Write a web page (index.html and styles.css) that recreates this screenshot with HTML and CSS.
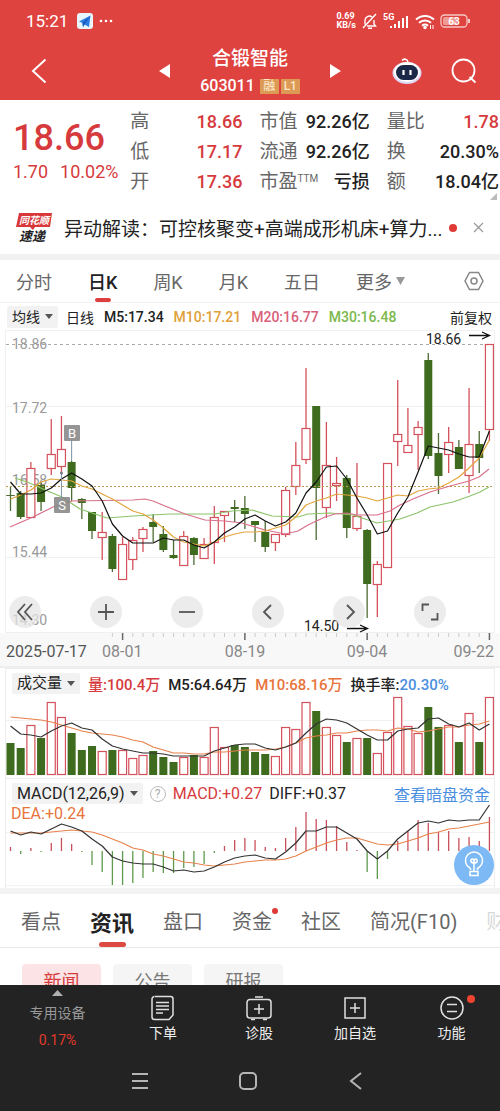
FILE: index.html
```html
<!DOCTYPE html>
<html lang="zh-CN">
<head>
<meta charset="utf-8">
<meta name="viewport" content="width=device-width, initial-scale=1">
<title>合锻智能 603011</title>
<link rel="stylesheet" href="styles.css">
</head>
<body>
<div class="app">
  <header class="header">
    <div class="status">
      <span class="clock">15:21</span>
      <svg class="tg" viewBox="0 0 16 16" width="16" height="16"><rect width="16" height="16" rx="3" fill="#e8f6fb"/><path d="M2 8.500 13.500 2.500 12 14 7.500 11.500 6 14 5.500 10Z" fill="#2b7de0"/><path d="M5.500 10 13.500 2.500 7.500 11.500 6 14Z" fill="#1a56c0"/></svg>
      <svg viewBox="0 0 16 4" width="16" height="4" fill="#fff"><circle cx="3" cy="2" r="1.300"/><circle cx="8" cy="2" r="1.300"/><circle cx="13" cy="2" r="1.300"/></svg>
      <span class="speed">0.69<br>KB/s</span>
      <svg viewBox="0 0 17 17" width="17" height="17" fill="none" stroke="#fff" stroke-width="1.400"><path d="M4 11.500V7.500a4.500 4.500 0 0 1 7-3.700M13 7v4l1.500 2H6M7 15.300h4M15 1 2 15"/></svg>
      <svg class="signal" viewBox="0 0 27 17" width="27" height="17" fill="#fff"><text x="0" y="7" font-size="9" font-weight="700">5G</text><rect x="7" y="13" width="2" height="2"/><rect x="11" y="11" width="2" height="4"/><rect x="15" y="8" width="2" height="7"/><rect x="19" y="5" width="2" height="10"/><rect x="23" y="3" width="2" height="12"/></svg>
      <svg viewBox="0 0 20 17" width="20" height="17" fill="none" stroke="#fff" stroke-width="2"><path d="M1 6.500a13 13 0 0 1 18 0M4 9.700a9 9 0 0 1 12 0M7 12.700a5 5 0 0 1 6 0"/><circle cx="10" cy="14.500" r=".8" fill="#fff"/><path d="M15.500 12v4M18 12v4" stroke-width="1"/></svg>
      <svg class="battery" viewBox="0 0 32 14" width="32" height="14"><rect x="1" y="1" width="26" height="12" rx="3.500" fill="none" stroke="#f6c9c5" stroke-width="1.300"/><rect x="3" y="3" width="14" height="8" rx="1.500" fill="#ee9a95"/><path d="M29 5v4" stroke="#f6c9c5" stroke-width="2"/><text x="14" y="10.500" font-size="10" font-weight="700" fill="#fff" text-anchor="middle">63</text></svg>
    </div>
    <div class="titlebar">
      <button class="ib back" aria-label="返回"><svg viewBox="0 0 16 26" width="16" height="26" fill="none" stroke="#fff" stroke-width="2"><path d="M14.500 1.500 2 13l12.500 11.500"/></svg></button>
      <div class="stock">
        <button class="ib" aria-label="上一只"><svg viewBox="0 0 11 14" width="11" height="14" fill="#fff"><path d="M11 0v14L0 7z"/></svg></button>
        <div class="name">
          <h1>合锻智能</h1>
          <div class="code">603011<span class="tag">融</span><span class="tag">L1</span></div>
        </div>
        <button class="ib" aria-label="下一只"><svg viewBox="0 0 11 14" width="11" height="14" fill="#fff"><path d="M0 0v14l11-7z"/></svg></button>
      </div>
      <div class="tools">
        <button class="ib" aria-label="智能助手"><svg viewBox="0 0 30 28" width="30" height="28"><path d="M10 3.500q2-2.500 5-.5l1 2" fill="none" stroke="#fff" stroke-width="1.500"/><ellipse cx="15" cy="16" rx="14.500" ry="11" fill="#dcd8f5"/><ellipse cx="15" cy="15" rx="13" ry="10" fill="#fff"/><rect x="4" y="8" width="22" height="15" rx="7.500" fill="#1c2848"/><path d="M11.500 13v5M18.500 13v5" stroke="#fff" stroke-width="2.200"/></svg></button>
        <button class="ib" aria-label="搜索"><svg viewBox="0 0 26 26" width="26" height="26" fill="none" stroke="#fff" stroke-width="1.800"><circle cx="12.500" cy="12.500" r="11"/><path d="m18.500 19 6 5.500"/></svg></button>
      </div>
    </div>
  </header>

  <main class="main">
    <section class="quote">
      <div class="price"><strong>18.66</strong><span class="chg"><span>1.70</span><span>10.02%</span></span></div>
      <dl class="facts">
        <div><dt>高</dt><dd class="up">18.66</dd></div>
        <div><dt>低</dt><dd class="up">17.17</dd></div>
        <div><dt>开</dt><dd class="up">17.36</dd></div>
      </dl>
      <dl class="facts">
        <div><dt>市值</dt><dd>92.26亿</dd></div>
        <div><dt>流通</dt><dd>92.26亿</dd></div>
        <div><dt>市盈<sup>TTM</sup></dt><dd>亏损</dd></div>
      </dl>
      <dl class="facts">
        <div><dt>量比</dt><dd class="up">1.78</dd></div>
        <div><dt>换</dt><dd>20.30%</dd></div>
        <div><dt>额</dt><dd>18.04亿</dd></div>
      </dl>
      <svg class="corner" viewBox="0 0 7 7" width="7" height="7"><path d="M7 0v7H0z" fill="#bbb"/></svg>
    </section>

    <section class="news">
      <svg class="logo" viewBox="0 0 36 30" width="36" height="30"><path d="M3 0h33l-2 14H19l-2 3-3-3H0z" fill="#d8383a"/><text x="18" y="11" text-anchor="middle" font-size="10" fill="#fff">同花顺</text><text x="16" y="28" text-anchor="middle" font-size="13" fill="#222">速递</text></svg>
      <a class="headline" href="#news">异动解读：可控核聚变+高端成形机床+算力...</a>
      <span class="dot"></span>
      <button class="ib" aria-label="关闭"><svg viewBox="0 0 11 11" width="11" height="11" stroke="#999" stroke-width="1.200"><path d="m1 1 9 9M10 1l-9 9"/></svg></button>
    </section>

    <nav class="periods">
      <button>分时</button><button class="on">日K</button><button>周K</button><button>月K</button><button>五日</button>
      <button class="more">更多<svg viewBox="0 0 9 8" width="9" height="8" fill="#999"><path d="M0 0h9L4.500 8z"/></svg></button>
      <button class="gear" aria-label="设置"><svg viewBox="0 0 20 20" width="20" height="20" fill="none" stroke="#888" stroke-width="1.500"><path d="M5.500 1.500h9L19 10l-4.500 8.500h-9L1 10z"/><circle cx="10" cy="10" r="3"/></svg></button>
    </nav>

    <div class="legend ma">
      <button class="pick">均线<svg viewBox="0 0 8 5" width="8" height="5" fill="#555"><path d="M0 0h8L4 5z"/></svg></button>
      <span>日线</span><b>M5:17.34</b><b class="m10">M10:17.21</b><b class="m20">M20:16.77</b><b class="m30">M30:16.48</b>
      <button class="adj">前复权</button>
    </div>

    <div class="kline">
      <svg id="kline" class="chart" viewBox="0 330 500 338" role="img" aria-label="日K线图"></svg>
      <div class="controls">
        <button aria-label="最左"><svg viewBox="0 0 18 18" width="18" height="18"><path d="M9 1 2 9l7 8M16 1 9 9l7 8"/></svg></button>
        <button aria-label="放大"><svg viewBox="0 0 18 18" width="18" height="18"><path d="M9 1v16M1 9h16"/></svg></button>
        <button aria-label="缩小"><svg viewBox="0 0 18 18" width="18" height="18"><path d="M1 9h16"/></svg></button>
        <button aria-label="左移"><svg viewBox="0 0 18 18" width="18" height="18"><path d="M12 2 5 9l7 7"/></svg></button>
        <button aria-label="右移"><svg viewBox="0 0 18 18" width="18" height="18"><path d="m7 2 7 7-7 7"/></svg></button>
        <button aria-label="全屏"><svg viewBox="0 0 18 18" width="18" height="18"><path d="M1.500 8V1.500H8M16.500 10v6.500H10"/></svg></button>
      </div>
    </div>

    <section class="panel">
      <div class="legend vol">
        <button class="pick">成交量<svg viewBox="0 0 8 5" width="8" height="5" fill="#555"><path d="M0 0h8L4 5z"/></svg></button>
        <b class="up">量:100.4万</b><b>M5:64.64万</b><b class="or">M10:68.16万</b><b>换手率:<span class="blue">20.30%</span></b>
      </div>
      <svg id="volume" class="chart" viewBox="6 694 488 84" role="img" aria-label="成交量"></svg>
    </section>

    <section class="panel macd">
      <div class="legend">
        <button class="pick">MACD(12,26,9)<svg viewBox="0 0 8 5" width="8" height="5" fill="#555"><path d="M0 0h8L4 5z"/></svg></button>
        <span class="q">?</span><span class="up">MACD:+0.27</span><span>DIFF:+0.37</span>
        <a class="blue" href="#fund">查看暗盘资金</a>
      </div>
      <svg id="macd" class="chart" viewBox="6 804 488 84" role="img" aria-label="MACD"></svg>
      <button class="tip" aria-label="提示"><svg viewBox="0 0 24 28" width="24" height="28" fill="none" stroke="#fff" stroke-width="1.500"><path d="M8.500 19v-1.500c-3-1.800-5-4.500-5-8a8.500 8.500 0 0 1 17 0c0 3.500-2 6.200-5 8V19M8 20.500h8v4H8zM12 20v-8M12 12c-4 0-4-4-1.500-4 1.500 0 1.500 2 1.500 4 0-2 0-4 1.500-4 2.500 0 2.500 4-1.500 4"/></svg></button>
    </section>

    <nav class="tabs">
      <button>看点</button><button class="on">资讯</button><button>盘口</button><button class="new">资金</button><button>社区</button><button>简况(F10)</button><button class="fade">财务</button>
    </nav>
    <div class="chips"><button class="on">新闻</button><button>公告</button><button>研报</button></div>
  </main>

  <footer class="footer">
    <div class="actions">
      <button class="sector"><svg viewBox="0 0 11 6" width="11" height="6"><path d="M0 6h11L5.500 0z"/></svg><span>专用设备</span><span class="pct">0.17%</span></button>
      <button><svg viewBox="0 0 26 26" width="26" height="26"><path d="M5 1.500h15.500a2.500 2.500 0 0 1 2.500 2.500v16l-4 4.500H4.500A2.500 2.500 0 0 1 2 22V4a2.500 2.500 0 0 1 2.500-2.500M6 7.500h13M6 11h13M6 14.500h13M6 18h7"/></svg>下单</button>
      <button><svg viewBox="0 0 26 26" width="26" height="26"><rect x="1" y="4.500" width="24" height="18.500" rx="3"/><path d="M9 2h8M13 9v10M8 14h10M5 24.500h4M17 24.500h4"/></svg>诊股</button>
      <button><svg viewBox="0 0 26 26" width="26" height="26"><path d="M3 3h20v20H3zM13 8v10M8 13h10"/></svg>加自选</button>
      <button class="alert"><svg viewBox="0 0 26 26" width="26" height="26"><circle cx="13" cy="13" r="11"/><path d="M8 9.500h10M8 16.500h10"/></svg>功能</button>
    </div>
    <div class="keys">
      <button aria-label="菜单"><svg viewBox="0 0 18 18" width="18" height="18"><path d="M1 2h16M1 9h16M1 16h16"/></svg></button>
      <button aria-label="主页"><svg viewBox="0 0 18 18" width="18" height="18"><rect x="1" y="1" width="16" height="16" rx="4"/></svg></button>
      <button aria-label="返回"><svg viewBox="0 0 18 18" width="18" height="18"><path d="M14 1 4 9l10 8"/></svg></button>
    </div>
  </footer>
</div>
<script src="chart.js"></script>
</body>
</html>
```
FILE: styles.css
```css
* { box-sizing: border-box; }
body, h1, dl, dd { margin: 0; }
body { font-family: Roboto, "Noto Sans CJK SC", sans-serif; color: #222; background: #fff; }
button { font: inherit; color: inherit; background: none; border: 0; padding: 0; margin: 0; white-space: nowrap; }
a { color: inherit; text-decoration: none; }
svg { display: block; flex: none; }

.app { display: flex; flex-direction: column; height: 100vh; overflow: hidden; }
.main { flex: 1; min-height: 0; overflow: hidden; }
.up { color: #d63a3c; }
.or { color: #e8743c; }
.blue { color: #4a8fe0; }

.header { background: #df4340; color: #fff; height: 100px; }
.status { display: flex; align-items: center; height: 42px; padding: 0 28px 0 26px; gap: 5px; }
.clock { font-size: 17px; }
.tg { margin-left: 4px; }
.speed { margin-left: auto; font-size: 9px; line-height: 9px; font-weight: 700; }
.titlebar { display: grid; grid-template-columns: 1fr auto 1fr; align-items: center; height: 58px; padding: 0 23px; }
.ib { display: flex; }
.back { padding-left: 8px; }
.stock { display: flex; align-items: center; gap: 23px; }
.name { width: 114px; display: flex; flex-direction: column; align-items: center; }
.name h1 { font-size: 19px; font-weight: 500; line-height: 30px; }
.code { display: flex; align-items: center; gap: 2px; font-size: 16px; line-height: 24px; font-weight: 500; }
.tag { min-width: 19px; padding: 0 2px; background: #dc9a55; color: #fbe6c8; font-size: 12px; line-height: 15px; text-align: center; }
.tag:first-child { margin-left: 3px; }
.tools { display: flex; justify-content: flex-end; align-items: center; gap: 29px; }

.quote { position: relative; display: grid; grid-template-columns: minmax(0, 100fr) minmax(0, 112fr) minmax(0, 110fr) minmax(0, 112fr); column-gap: 17px; padding: 7px 1px 8px 13px; }
.price { color: #d63a3c; white-space: nowrap; }
.price strong { display: block; font-size: 36px; font-weight: 500; line-height: 46px; padding-top: 8px; }
.chg { display: flex; gap: 12px; font-size: 18px; line-height: 22px; }
.facts > div { display: flex; justify-content: space-between; line-height: 30px; font-size: 18px; white-space: nowrap; }
.facts dt { color: #666; font-size: 19px; }
.facts dd { font-weight: 500; }
.facts sup { font-size: 10px; line-height: 10px; vertical-align: 6px; }
.corner { position: absolute; right: 3px; bottom: 5px; }

.news { display: flex; align-items: center; height: 55px; padding: 0 16px 4px; border-bottom: 6px solid #f1f1f1; }
.logo { font-weight: 700; font-style: italic; }
.headline { flex: 1; min-width: 0; margin-left: 12px; font-size: 19px; white-space: nowrap; overflow: hidden; }
.dot { width: 8px; height: 8px; border-radius: 50%; background: #e03a36; margin-right: 16px; }

.periods { display: flex; gap: 36px; height: 43px; padding: 0 16px; font-size: 18px; color: #666; border-bottom: 1px solid #f2f2f2; }
.periods button, .tabs button { position: relative; display: flex; align-items: center; }
.periods .on { color: #222; font-weight: 500; }
.periods .more { gap: 4px; }
.periods .gear { margin-left: auto; }
.periods .on::after { content: ""; position: absolute; bottom: 0; left: 7px; width: 16px; height: 4px; border-radius: 2px; background: #dc3f3e; }

.legend { display: flex; align-items: center; white-space: nowrap; }
.legend b { font-weight: 500; }
.pick { display: flex; align-items: center; gap: 5px; background: #f2f2f2; padding: 0 5px; line-height: 22px; border-radius: 2px; }
.ma { height: 27px; padding: 0 8px 0 7px; font-size: 14px; gap: 10px; }
.ma .pick { margin-right: -2px; }
.m10 { color: #dfa13a; }
.m20 { color: #d9607a; }
.m30 { color: #7cb84c; }
.adj { margin-left: auto; }

.chart { width: 100%; height: auto; }
.kline { position: relative; }
.controls { position: absolute; left: 9px; right: 54px; bottom: 40px; display: flex; justify-content: space-between; }
.controls button { display: flex; align-items: center; justify-content: center; width: 32px; height: 32px; border-radius: 50%; background: rgba(228, 228, 228, .72); }
.controls svg { fill: none; stroke: #555; stroke-width: 1.8; }

.panel { position: relative; margin: 0 5px; border: 1px solid #eee; border-width: 1px 1px 0; }
.panel .legend { height: 25px; padding: 4px 4px 0 6px; }
.panel .pick { line-height: 21px; }
.vol { font-size: 15px; gap: 8px; }
.macd .legend { font-size: 16px; gap: 7px; }
.macd .legend a { margin-left: auto; }
.q { width: 16px; height: 16px; border: 1px solid #bbb; border-radius: 50%; color: #aaa; font-size: 12px; line-height: 14px; text-align: center; }
.tip { position: absolute; right: 0; bottom: 3px; display: flex; align-items: center; justify-content: center; width: 40px; height: 40px; border-radius: 50%; background: #7db9f5; }

.tabs { display: flex; gap: 29px; height: 60px; padding-left: 21px; border-top: 6px solid #f3f3f3; border-bottom: 1px solid #e8e8e8; font-size: 20px; color: #666; overflow: hidden; }
.tabs .on { font-size: 22px; font-weight: 700; color: #222; }
.tabs .on::after { content: ""; position: absolute; bottom: 0; left: 9px; width: 27px; height: 5px; border-radius: 3px; background: #dc4a42; }
.tabs .new::after { content: ""; position: absolute; top: 14px; right: -6px; width: 6px; height: 6px; border-radius: 50%; background: #e03a36; }
.tabs .fade { opacity: .25; }
.chips { display: flex; gap: 12px; padding: 16px 22px; font-size: 18px; color: #777; }
.chips button { width: 79px; height: 32px; border-radius: 4px; background: #f5f5f5; }
.chips .on { background: #fce4e6; color: #d63a3c; }

.footer { background: #232323; color: #eee; height: 126px; }
.actions { display: grid; grid-template-columns: 115fr 96fr 96fr 96fr 97fr; height: 66px; padding-top: 10px; }
.actions button { position: relative; display: flex; flex-direction: column; align-items: center; font-size: 14px; line-height: 20px; gap: 2px; }
.actions svg, .keys svg { fill: none; stroke: #e0e0e0; stroke-width: 1.5; }
.actions .sector { color: #999; gap: 7px; margin-top: -5px; }
.actions .sector svg { fill: #b0b0b0; stroke: none; }
.pct { color: #e23a2c; }
.alert::after { content: ""; position: absolute; top: 0; left: calc(50% + 15px); width: 8px; height: 8px; border-radius: 50%; background: #ee4430; }
.keys { display: flex; justify-content: center; height: 60px; padding-right: 4px; }
.keys button { width: 108px; display: flex; align-items: center; justify-content: center; }
.keys svg { stroke: #b5b5b5; stroke-width: 2; }
```
FILE: chart.js
```js
const RED = "#d4505a", GREEN = "#3f6b1f";
const x = i => 10.5 + i * 10.19;
const rect = (l, t, w, h, a) => `<rect x="${l}" y="${t}" width="${w}" height="${h}" ${a}/>`;
const line = (x1, y1, x2, y2, c, a = "") => `<line x1="${x1}" y1="${y1}" x2="${x2}" y2="${y2}" stroke="${c}" ${a}/>`;
const poly = (pts, c) => `<polyline points="${pts}" fill="none" stroke="${c}" stroke-width="1.2" stroke-linejoin="round"/>`;
const series = (ys, c) => poly(ys.map((y, i) => `${x(i)},${y}`).join(" "), c);
const text = (tx, ty, s, c, size, a = "") => `<text x="${tx}" y="${ty}" fill="${c}" font-size="${size}" ${a}>${s}</text>`;

const body = (i, top, bottom, up) => up
  ? rect(x(i) - 4, top + .5, 8, Math.max(bottom - top - 1, 1), `fill="#fff" stroke="${RED}" stroke-width="1.2"`)
  : rect(x(i) - 4, top, 8, Math.max(bottom - top, 1), `fill="${GREEN}"`);

// high, body top, body bottom, low, rising
const candles = [
  [487,495,496,511,0],[491,493,517,519,0],[462,468,518,518,1],[482,485,502,511,0],[419,454,469,475,1],[416,449,467,473,1],
  [461,462,488,501,0],[498,499,503,519,0],[512,512,531,539,0],[512,532,538,560,1],[534,536,569,572,0],[537,544,580,580,1],
  [537,540,560,570,1],[527,529,539,552,1],[514,522,527,542,0],[526,534,550,552,0],[540,555,558,559,0],[531,536,566,566,1],
  [537,538,555,565,0],[538,544,559,559,1],[506,517,543,564,1],[511,511,516,542,1],[500,507,509,522,0],[496,508,514,529,0],
  [521,521,525,542,0],[521,532,547,552,0],[534,534,543,551,1],[487,490,535,537,1],[442,465,487,495,1],[368,428,460,464,1],
  [406,406,488,540,0],[422,465,508,518,1],[457,483,486,501,1],[475,478,528,538,0],[463,516,529,531,1],[529,530,584,618,0],
  [561,564,585,617,1],[463,463,568,568,1],[380,434,442,466,1],[408,445,453,453,1],[421,427,435,470,1],[353,360,456,459,0],
  [433,453,476,494,0],[427,442,455,473,1],[440,447,469,469,0],[388,444,476,493,1],[431,444,458,473,0],[344,344,430,441,1]
];
const ma5 = [482,494,494,493,488,479,473,479,486,501,524,536,543,543,543,538,540,540,545,548,542,533,527,519,515,521,526,522,513,493,482,467,466,479,498,515,534,531,513,497,472,446,448,450,454,457,457,431];
const ma10 = [499,495,490,482,479,480,481,486,489,494,499,505,511,514,520,528,537,542,544,546,542,537,534,532,532,531,528,525,517,505,501,498,494,495,496,498,501,498,495,496,491,489,488,483,477,468,458,440];
const ma20 = "10,527 33,517 53,507 62,504 72,501 133,500 145,499 153,501 165,506 185,514 205,520 225,521 242,523 265,530 285,534 298,531 308,525 325,517 335,514 347,513 357,515 377,515 390,511 400,505 413,499 430,492 450,486 469,481 479,477 489,469";
const ma30 = "15,478 27,482 50,492 62,497 80,509 107,518 133,516 170,514 215,514 232,511 252,510 272,516 298,517 308,514 330,513 353,515 377,523 400,519 417,513 430,507 453,502 470,496 480,492 489,487";

let k = rect(0, 633, 500, 33, 'fill="#f8f8f8"');
k += `<path d="M5.500 330.500H494.500V632.500H5.500ZM5.500 406.500H494.500M5.500 557.500H494.500" fill="none" stroke="#f0f0f0"/>`;
k += line(0, 667, 500, 667, "#eee", 'stroke-width="2"');
k += line(6, 344.5, 494, 344.5, "#aaa", 'stroke-dasharray="3 3"');
[["18.86", 349], ["17.72", 413], ["16.58", 485], ["15.44", 557], ["14.30", 625]].forEach(([s, y]) => { k += text(12, y, s, "#999", 14); });
candles.forEach(([hi, top, bottom, lo, up], i) => {
  k += line(x(i), hi, x(i), lo, up ? RED : "#4d6b35", 'stroke-width="1.3"') + body(i, top, bottom, up);
});
k += line(x(0) - 4, 495.5, x(0) + 4, 495.5, "#4d6b35");
k += line(6, 486.5, 494, 486.5, "#b99a50", 'stroke-dasharray="2 2"');
k += poly(ma30, "#8cc46a") + poly(ma20, "#d9708a") + series(ma10, "#e2a63c") + series(ma5, "#111");
k += line(x(6), 440, x(6), 461, "#7d93a5") + line(x(5), 473, x(5), 497, "#7d93a5") + `<circle cx="${x(5)}" cy="473" r="1.5" fill="#778"/>`;
[[64, 425, "B"], [54, 497, "S"]].forEach(([l, t, s]) => {
  k += rect(l, t, 16, 16, 'rx="1" fill="#8a8a8a" fill-opacity=".9"') + text(l + 8, t + 13, s, "#fff", 13, 'text-anchor="middle"');
});
k += text(426, 344, "18.66", "#222", 14) + text(304, 631, "14.50", "#222", 14);
k += `<path d="M469 335.500H489M482 332l7.500 3.500-7.500 3.500M347 628.500H367M360 625l7.500 3.500-7.500 3.500" fill="none" stroke="#111" stroke-width="1.300"/>`;
for (let i = 10; i < 48; i++) {
  const major = (i - 11) % 12 === 0;
  k += line(x(i), 633, x(i), major ? 640 : 637, major ? "#666" : "#ccc", major ? 'stroke-width="1.500"' : "");
}
k += text(6, 657, "2025-07-17", "#555", 16) + text(102, 657, "08-01", "#888", 16) + text(245, 657, "08-19", "#888", 16, 'text-anchor="middle"');
k += text(367, 657, "09-04", "#888", 16, 'text-anchor="middle"') + text(494, 657, "09-22", "#888", 16, 'text-anchor="end"');
document.getElementById("kline").innerHTML = k;

const vol = [743,748,725,738,702,717,733,750,746,751,750,750,758,755,751,757,762,757,755,757,727,747,745,747,752,754,756,727,729,702,711,727,735,742,738,738,753,732,697,726,733,707,727,725,742,713,742,697];
let v = line(6, 720.5, 494, 720.5, "#f2f2f2");
vol.forEach((y, i) => { v += body(i, y, 775, candles[i][4]); });
v += series([717,718,719,720,722,725,728,731,733,734,735,737,740,742,747,750,753,753,754,754,752,752,751,750,750,750,749,747,743,738,736,735,733,733,731,730,730,731,728,729,732,731,729,727,727,725,724,721], "#e8824c");
v += series([726,734,735,737,731,726,723,728,730,739,746,749,751,753,753,754,756,756,756,756,751,748,745,744,744,748,750,747,743,733,724,719,720,723,729,735,740,740,731,729,728,719,718,724,727,723,730,724], "#333");
document.getElementById("volume").innerHTML = v;

const hist = [847,854,848,852,843,838,844,852,865,872,885,885,883,878,872,873,873,868,867,864,853,846,840,838,840,847,848,838,827,812,819,820,826,842,850,872,879,859,841,831,820,823,832,831,838,837,841,817];
let m = line(6, 832.5, 494, 832.5, "#f2f2f2") + line(6, 885.5, 494, 885.5, "#f2f2f2");
hist.forEach((y, i) => { m += line(x(i), 851, x(i), y, y < 851 ? "#c9505a" : "#5f9a4c", 'stroke-width="1.3"'); });
m += series([833,833,833,833,832,831,830,831,832,835,839,843,848,850,854,856,859,862,863,865,866,865,864,862,861,860,860,859,856,851,847,843,840,838,838,841,844,845,844,841,838,834,832,829,828,826,824,822], "#e8824c");
m += series([831,835,832,834,829,824,827,831,839,846,857,861,863,864,864,867,871,870,872,871,867,862,858,856,855,858,859,852,843,831,831,827,827,833,839,851,859,851,839,831,823,821,823,820,821,820,820,805], "#333");
m += text(11, 819, "DEA:+0.24", "#e8743c", 16);
document.getElementById("macd").innerHTML = m;
```
